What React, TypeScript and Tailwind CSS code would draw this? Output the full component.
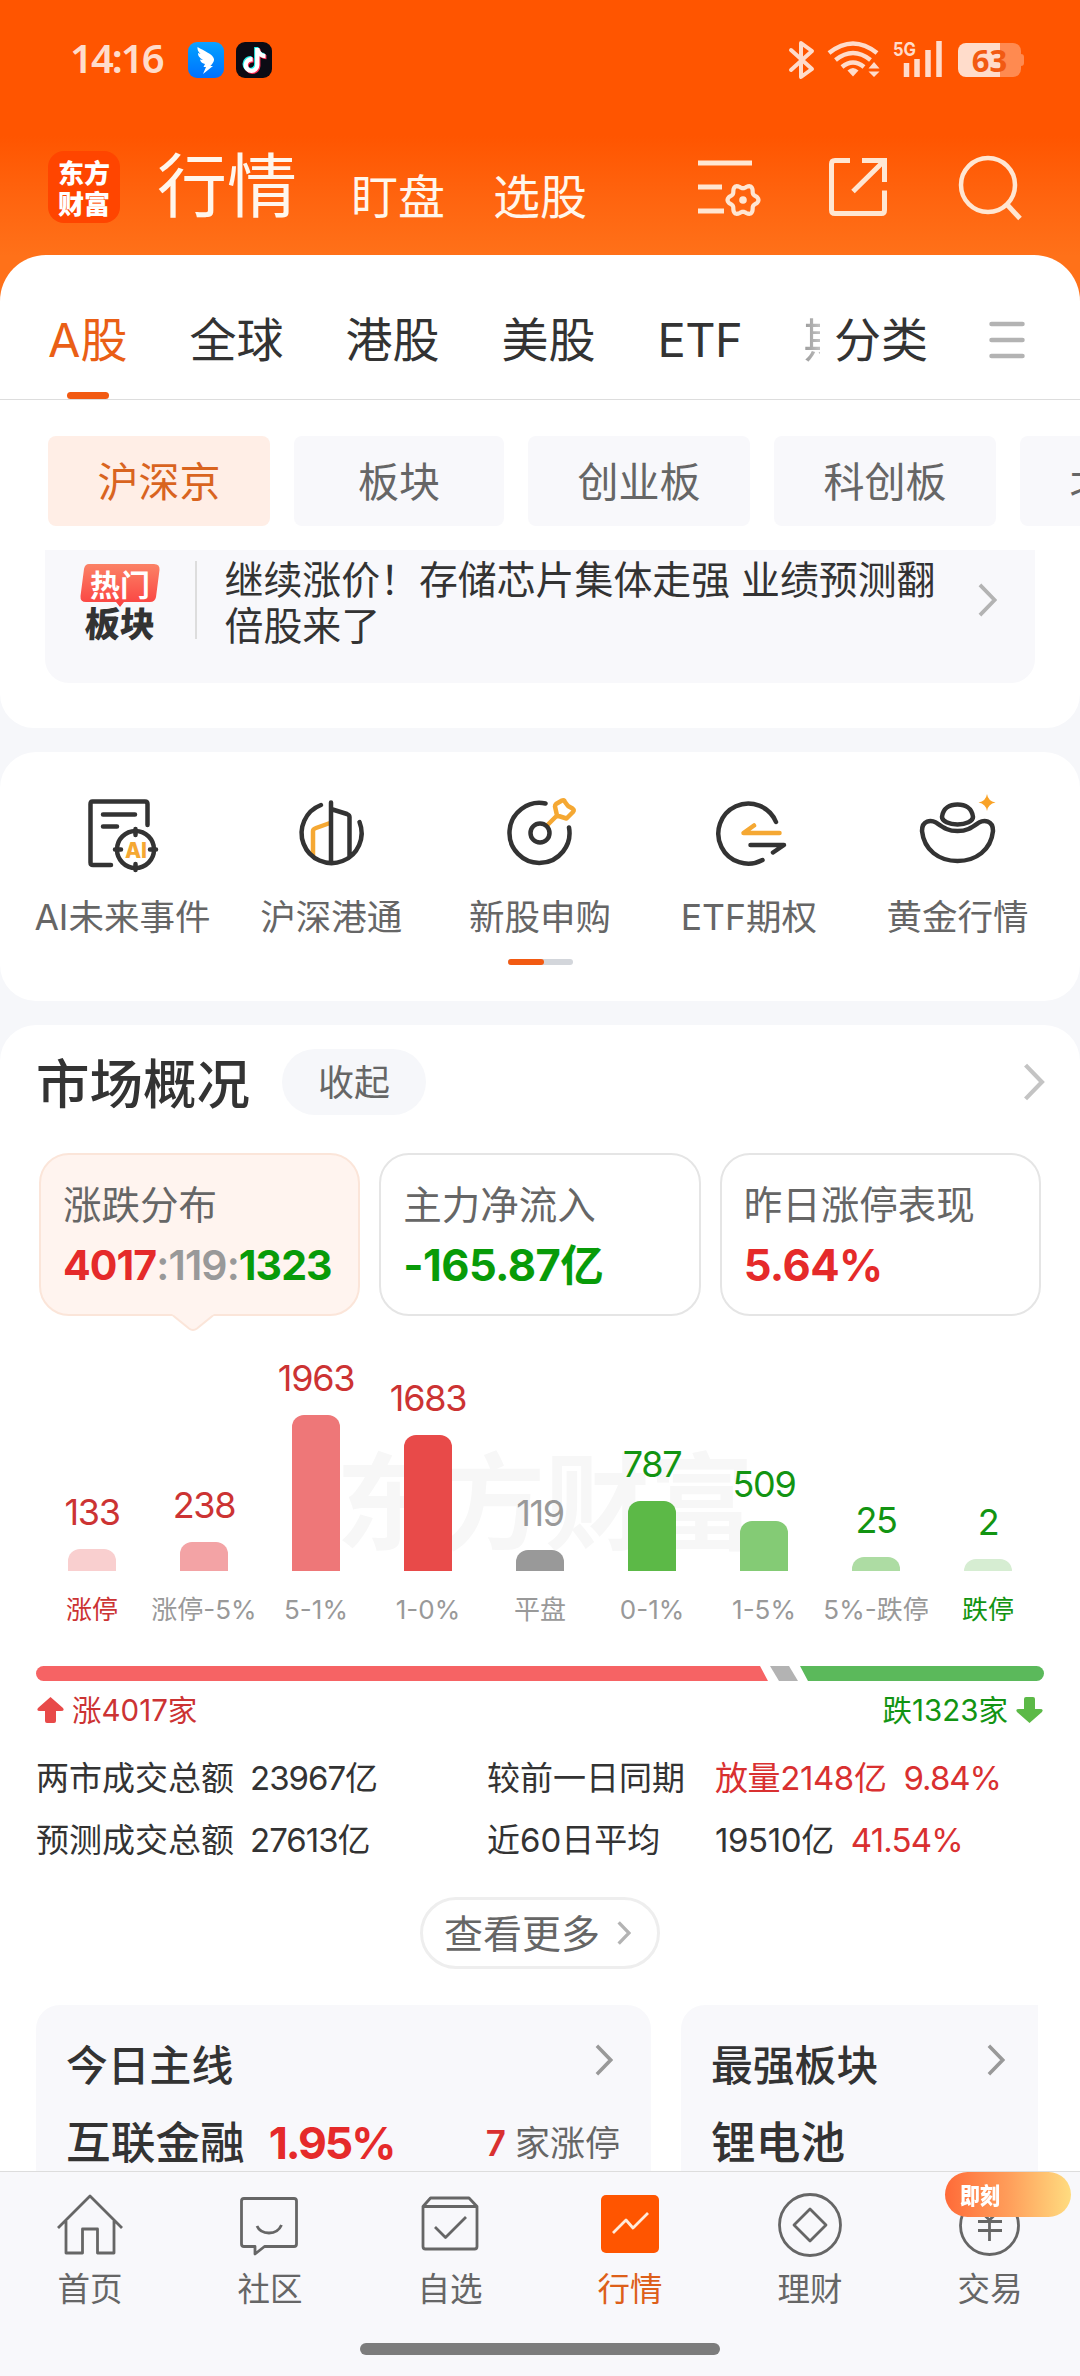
import type { ReactNode } from 'react';
import clsx from 'clsx';
import { FaTiktok } from 'react-icons/fa6';

export default function App() {
  return (
    <div className="relative flex h-[2376px] w-[1080px] flex-col overflow-hidden bg-[#f6f7fa] font-['Inter','Noto_Sans_CJK_SC',sans-serif] text-[#333333]">
      <Header />
      <main className="relative -mt-[47px] flex min-h-0 flex-1 flex-col gap-6 overflow-hidden">
        <MarketSheet />
        <QuickEntries />
        <Overview />
      </main>
      <BottomNav />
    </div>
  );
}

// -----------------------------------------------------------------------------
// Header
// -----------------------------------------------------------------------------

// Six-lobed outline of the settings gear, centred on (46, 45)
const GEAR = Array.from({ length: 72 }, (_, i) => {
  const a = (i * Math.PI) / 36;
  const r = 13.6 + 1.9 * Math.cos(6 * a);
  return `${(46 + r * Math.cos(a)).toFixed(2)},${(45 + r * Math.sin(a)).toFixed(2)}`;
}).join(' ');

function Header() {
  return (
    <header className="h-[302px] shrink-0 bg-linear-to-b from-[#ff5500] from-45% to-[#ff7119] to-85%">
      <StatusBar />
      <div className="flex h-[134px] items-center pl-12 text-[#fff6ec]">
        <div className="flex size-[72px] flex-col items-center justify-center rounded-[16px] bg-[#ff4500] font-['Noto_Sans_CJK_SC',sans-serif] text-[26px] leading-[31px] font-black text-white">
          <span>东方</span>
          <span>财富</span>
        </div>
        <h1 className="ml-[37px] text-[70px] leading-[80px]">行情</h1>
        <span className="mt-[19px] ml-[54px] text-[47px] leading-[56px]">盯盘</span>
        <span className="mt-[19px] ml-[48px] text-[47px] leading-[56px]">选股</span>
        <div className="ml-[110px] flex items-center text-[#ffe6d2]">
          <svg className="h-[64px] w-[66px]" viewBox="0 0 66 64" fill="none" stroke="currentColor" strokeWidth="5">
            <path d="M1 8h54M1 32h24M1 56h26" />
            <polygon points={GEAR} strokeWidth="4.2" strokeLinejoin="round" />
            <circle cx="46" cy="45" r="3.8" fill="currentColor" stroke="none" />
          </svg>
          <svg className="ml-[65px] h-[60px] w-[60px]" viewBox="0 0 60 60" fill="none" stroke="currentColor" strokeWidth="5">
            <path d="M22 3.5H7Q3.5 3.5 3.5 7V53Q3.5 56.5 7 56.5H53.5Q56.5 56.5 56.500 53V33.5" />
            <path d="M34 3.5H56.5V25M56 4L25 34.5" />
          </svg>
          <svg className="ml-[69px] h-[68px] w-[66px]" viewBox="0 0 66 68" fill="none" stroke="currentColor" strokeWidth="4.5">
            <circle cx="31" cy="32" r="27" />
            <path d="M50 51.5L63 65.5" strokeWidth="5" />
          </svg>
        </div>
      </div>
    </header>
  );
}

function StatusBar() {
  return (
    <div className="flex h-[120px] items-center pl-[70px] text-[#ffdccb]">
      <span className="mb-1 w-[118px] font-['Noto_Sans',sans-serif] text-[40px] leading-none font-semibold tracking-[-2px]">14:16</span>
      <div className="size-9 rounded-[9px] bg-linear-to-b from-[#0da2ff] to-[#0070ff]">
        <svg viewBox="0 0 36 36" fill="#ffffff">
          <path d="M9.5 5C16 9 25 12 26 17C26.500 20 23 23 22.5 24H25L15 32L18 25H15.5L17 22C13.5 21 12.5 19.5 12 17.5L15 18C11 15.5 10 13.5 10 11L12.5 12C10 9.5 9.2 7.5 9.5 5Z" />
        </svg>
      </div>
      <div className="ml-3 flex size-9 items-center justify-center rounded-[9px] bg-[#0b0b14]">
        <FaTiktok className="size-[25px] text-white [filter:drop-shadow(-1px_-1px_0_#25f4ee)_drop-shadow(1px_1px_0_#fe2c55)]" />
      </div>
      <svg className="ml-[515px] h-10 w-[158px]" viewBox="0 0 158 40" fill="none" stroke="currentColor">
        {/* bluetooth */}
        <path d="M4 10L25 29L14 37V3L25 11L4 30" strokeWidth="4" strokeLinejoin="round" strokeLinecap="round" />
        {/* wifi */}
        <path d="M42 13Q66 -6 90 13M48.500 20Q66 6 83.5 20M55 27Q66 18 77 27" strokeWidth="4.5" />
        <path d="M66 36.5L60.5 30.5Q66 25.5 71.5 30.5Z" fill="currentColor" stroke="none" />
        <path d="M87 22L92.5 28.5H81.5ZM87 37L81.5 31.5H92.5Z" fill="currentColor" stroke="none" />
        {/* signal */}
        <path d="M119.500 23v14M130 19v18M141 10v27M152 1v36" strokeWidth="5.5" />
        <text x="106" y="16" fontSize="19" fontWeight="700" fill="currentColor" stroke="none" textLength="23" lengthAdjust="spacingAndGlyphs">
          5G
        </text>
      </svg>
      <div className="ml-[13px] flex h-[34px] w-[63px] items-center justify-center rounded-[8px] bg-linear-to-r from-[#ffdccb] from-66% to-[#ff8a50] to-66% font-['Noto_Sans',sans-serif] text-[31px] leading-none font-bold text-[#f25a12]">
        63
      </div>
      <div className="h-3 w-[3px] rounded-r-full bg-[#ff8a50]" />
    </div>
  );
}

// -----------------------------------------------------------------------------
// Market tabs and news
// -----------------------------------------------------------------------------

const BOARDS = [
  { label: '沪深京', box: 'w-[222px]' },
  { label: '板块', box: 'w-[210px]' },
  { label: '创业板', box: 'w-[222px]' },
  { label: '科创板', box: 'w-[222px]' },
  { label: '北交所', box: 'w-[222px]' },
];

function MarketSheet() {
  return (
    <section className="h-[473px] shrink-0 overflow-hidden rounded-t-[46px] rounded-b-[34px] bg-white">
      <div className="flex h-[145px] items-center border-b-[1.5px] border-[#dddddd] pt-[26px] text-[47px] leading-[56px]">
        <div className="flex w-[820px] items-center gap-[62px] overflow-hidden pl-12 whitespace-nowrap">
          <span className="w-[80px] text-[#ea5f16]">A股</span>
          <span>全球</span>
          <span>港股</span>
          <span>美股</span>
          <span className="w-[84px] tracking-[-0.5px]">ETF</span>
          <span className="bg-linear-to-r from-[#999999] to-white to-45% bg-clip-text text-transparent">期货</span>
        </div>
        <span className="ml-[14px]">分类</span>
        <svg className="ml-[61px] h-10 w-9" viewBox="0 0 36 40" stroke="#b3b3b3" strokeWidth="4.5" strokeLinecap="round">
          <path d="M2.500 4h31M2.500 20h31M2.500 36h31" />
        </svg>
      </div>
      <div className="-mt-2 ml-[67px] h-[7px] w-[42px] rounded-full bg-[#f25a12]" />

      <div className="mt-[37px] flex gap-6 overflow-hidden pl-12 text-[41px] leading-[92px] whitespace-nowrap text-[#666666]">
        {BOARDS.map((b, i) => (
          <div
            key={b.label}
            className={clsx(
              'h-[90px] shrink-0 rounded-[8px] text-center',
              b.box,
              i === 0 ? 'bg-[#ffeee6] text-[#d9641f]' : 'bg-[#f8f8fb]'
            )}
          >
            {b.label}
          </div>
        ))}
      </div>

      <div className="mx-[45px] mt-[24px] flex h-[133px] rounded-b-[24px] bg-[#f8f8fb]">
        <HotBadge />
        <div className="mt-[11px] ml-[35px] h-[78px] w-[1.5px] bg-[#dddddd]" />
        <p className="mt-[7px] ml-[28px] w-[730px] text-[38.9px] leading-[46px]">
          继续涨价！存储芯片集体走强&nbsp;业绩预测翻
          <br />
          倍股来了
        </p>
        <Chevron className="mt-[33px] ml-[23px] h-[34px] w-[19px] text-[#b3b3b3]" />
      </div>
    </section>
  );
}

function HotBadge() {
  return (
    <div className="mt-[13px] ml-[35px] w-[80px] font-['Noto_Sans_CJK_SC',sans-serif]">
      <div className="relative flex h-[40px] items-center justify-center">
        <svg className="absolute inset-0 h-[44px] w-[80px]" viewBox="0 0 80 44">
          <defs>
            <linearGradient id="hot" x1="0" y1="0" x2="0" y2="1">
              <stop offset="0" stopColor="#fb8266" />
              <stop offset="1" stopColor="#fb4140" />
            </linearGradient>
          </defs>
          <path d="M9 1H74Q80 1 79.5 7L76 34Q75 39 70 39H44L40 44L36 39H6Q0 39 0.5 33L4 6Q5 1 9 1Z" fill="url(#hot)" />
        </svg>
        <span className="relative text-[30px] leading-[40px] font-bold text-white">热门</span>
      </div>
      <div className="mt-[3px] -skew-x-3 text-center text-[35px] leading-[32px] font-black">板块</div>
    </div>
  );
}

// -----------------------------------------------------------------------------
// Quick entries
// -----------------------------------------------------------------------------

const ENTRIES: { label: string; icon: ReactNode }[] = [
  {
    label: 'AI未来事件',
    icon: (
      <>
        <path d="M67.5 34V13Q67.5 10.5 65 10.5H12.5Q10.5 10.5 10.5 13V71.5Q10.5 74 13 74H31M23 23.5H55M23 35.5H37" />
        <circle cx="55.5" cy="58.5" r="18.5" />
        <path d="M55.5 38v6M55.5 73v6M35 58.5h6M70 58.5h6" />
        <text x="45" y="66.5" fontSize="21" fontWeight="800" fill="#f5a833" stroke="none" textLength="22">
          AI
        </text>
      </>
    ),
  },
  {
    label: '沪深港通',
    icon: (
      <>
        <path d="M41 32L27 37Q24 38 24 40V65" stroke="#f5a833" />
        <path d="M32 14A30 30 0 1 0 70.5 31M42 11.5V71M42 18L58 23Q60.5 24 60.5 26V65" />
      </>
    ),
  },
  {
    label: '新股申购',
    icon: (
      <>
        <path
          d="M49.5 34L59 24.5M59 24.5L57 15.5Q57 14 58 13L64 9.5Q66 8.5 67 11L70 15L74.5 17.5Q76.5 19 75 21L68.5 27.5L59 24.5Z"
          stroke="#f5a833"
        />
        <path d="M47.5 12.5A30 30 0 1 0 71 36.5" />
        <circle cx="42" cy="42" r="9.5" />
      </>
    ),
  },
  {
    label: 'ETF期权',
    icon: (
      <>
        <path d="M72.5 42H36.5L47 34.5" stroke="#f5a833" />
        <path d="M69 31A30 30 0 1 0 55.5 69M43.5 54H77L66 61.5" />
      </>
    ),
  },
  {
    label: '黄金行情',
    icon: (
      <>
        <path d="M26 26C27 17 34 13.5 41.5 13.5C49 13.5 56 17 57 26C57 30 50 33.5 41.5 33.5C33 33.5 26 30 26 26Z" />
        <path d="M6 40C6 29 15 29 20 31.5C28 37 32 40 41.5 40C51 40 55 37 63 31.5C68 29 77 29 77 40C75 59 60 70 41.5 70C23 70 8 59 6 40Z" />
        <path d="M71 3Q72 10 79.5 11.5Q72 13 71 20Q70 13 62.5 11.5Q70 10 71 3Z" fill="#f9a226" stroke="none" />
      </>
    ),
  },
];

function QuickEntries() {
  return (
    <section className="h-[249px] shrink-0 rounded-[36px] bg-white px-[18px] pt-[39px]">
      <div className="grid grid-cols-5">
        {ENTRIES.map((e) => (
          <div key={e.label} className="flex flex-col items-center">
            <svg
              className="size-[84px]"
              viewBox="0 0 84 84"
              fill="none"
              stroke="#333333"
              strokeWidth="4.5"
              strokeLinecap="round"
              strokeLinejoin="round"
            >
              {e.icon}
            </svg>
            <span className="mt-[19px] text-[35.5px] leading-[48px] whitespace-nowrap text-[#666666]">{e.label}</span>
          </div>
        ))}
      </div>
      <div className="mx-auto mt-[17px] h-[6px] w-[65px] rounded-full bg-[#d3d6db]">
        <div className="h-full w-[36px] rounded-full bg-[#f25a12]" />
      </div>
    </section>
  );
}

// -----------------------------------------------------------------------------
// Market overview
// -----------------------------------------------------------------------------

const BARS = [
  { value: 133, label: '涨停', height: 22, bar: 'bg-[#f9cfcf]', text: 'text-[#cc3333]', caption: 'text-[#cc3333]' },
  { value: 238, label: '涨停-5%', height: 29, bar: 'bg-[#f3a3a5]', text: 'text-[#cc3333]', caption: 'text-[#999999]' },
  { value: 1963, label: '5-1%', height: 156, bar: 'bg-[#ee7778]', text: 'text-[#cc3333]', caption: 'text-[#999999]' },
  { value: 1683, label: '1-0%', height: 136, bar: 'bg-[#e84a49]', text: 'text-[#cc3333]', caption: 'text-[#999999]' },
  { value: 119, label: '平盘', height: 21, bar: 'bg-[#999999]', text: 'text-[#999999]', caption: 'text-[#999999]' },
  { value: 787, label: '0-1%', height: 70, bar: 'bg-[#5cb947]', text: 'text-[#129412]', caption: 'text-[#999999]' },
  { value: 509, label: '1-5%', height: 50, bar: 'bg-[#84cb75]', text: 'text-[#129412]', caption: 'text-[#999999]' },
  { value: 25, label: '5%-跌停', height: 14, bar: 'bg-[#addca3]', text: 'text-[#129412]', caption: 'text-[#999999]' },
  { value: 2, label: '跌停', height: 12, bar: 'bg-[#d6edd2]', text: 'text-[#129412]', caption: 'text-[#129412]' },
];

function Overview() {
  return (
    <section className="min-h-0 flex-1 rounded-t-[36px] bg-white pt-[24px]">
      <div className="flex h-[66px] items-center pl-9">
        <h2 className="mt-[5px] text-[53.5px] leading-[66px] font-medium">市场概况</h2>
        <span className="ml-[32px] h-[66px] w-[144px] rounded-full bg-[#f6f7fa] text-center text-[36px] leading-[69px] text-[#666666]">
          收起
        </span>
        <Chevron className="ml-[597px] h-[38px] w-[22px] text-[#c4c4c4]" />
      </div>

      <div className="mt-[38px] grid h-[163px] grid-cols-3 gap-[19px] px-[39px]">
        <SummaryCard title="涨跌分布" active>
          <span className="text-[41px] tracking-[-0.9px]">
            <b className="font-bold text-[#e52a2a]">4017</b>
            <span className="font-semibold text-[#999999]">:119:</span>
            <b className="font-bold text-[#089b08]">1323</b>
          </span>
        </SummaryCard>
        <SummaryCard title="主力净流入">
          <b className="text-[43.5px] font-bold tracking-[-0.6px] text-[#089b08]">-165.87亿</b>
        </SummaryCard>
        <SummaryCard title="昨日涨停表现">
          <b className="text-[43.5px] font-bold tracking-[-0.6px] text-[#e52a2a]">5.64%</b>
        </SummaryCard>
      </div>

      <Distribution />
      <Breadth />
      <Turnover />

      <div className="mt-[26px] flex justify-center">
        <button className="flex h-[72px] w-[240px] items-center rounded-full border-[3px] border-[#eeeeee] pl-[21px] text-[39px] leading-none text-[#666666]">
          查看更多
          <Chevron className="ml-[17px] h-[24px] w-[14px] text-[#b3b3b3]" thick={5} />
        </button>
      </div>

      <div className="mt-[36px] mr-[42px] ml-9 flex gap-[30px] overflow-hidden font-medium">
        <div className="h-[200px] w-[615px] shrink-0 rounded-t-[24px] bg-[#f8f8fb] pt-[33px] pr-[31px] pl-[30px]">
          <div className="flex h-[56px] items-center justify-between text-[41.8px] leading-[56px]">
            今日主线
            <Chevron className="mr-[7px] mb-3 h-[32px] w-[18px] text-[#999999]" />
          </div>
          <div className="mt-[21px] flex h-[56px] items-center text-[44.7px] leading-[56px]">
            互联金融
            <b className="ml-[24px] text-[44.5px] font-bold tracking-[-2.1px] text-[#e52a2a]">1.95%</b>
            <span className="ml-auto text-[35px] font-semibold text-[#d93030]">7</span>
            <span className="ml-[9px] text-[35px] font-normal text-[#666666]">家涨停</span>
          </div>
        </div>
        <div className="h-[200px] w-[615px] shrink-0 rounded-t-[24px] bg-[#f8f8fb] pt-[33px] pl-[30px]">
          <div className="flex h-[56px] items-center text-[41.8px] leading-[56px]">
            最强板块
            <Chevron className="mb-3 ml-[109px] h-[32px] w-[18px] text-[#999999]" />
          </div>
          <div className="mt-[21px] text-[44.7px] leading-[56px]">锂电池</div>
        </div>
      </div>
    </section>
  );
}

function SummaryCard({ title, active, children }: { title: string; active?: boolean; children: ReactNode }) {
  return (
    <div
      className={clsx(
        'relative rounded-[30px] border-2 pt-[22px] pl-[22px] whitespace-nowrap',
        active ? 'border-[#fbe5d9] bg-[#fff4ef]' : 'border-[#e5e5e5]'
      )}
    >
      <div className="text-[38.5px] leading-[56px] text-[#666666]">{title}</div>
      <div className="mt-[4px] leading-[56px]">{children}</div>
      {active && (
        <svg className="absolute top-[158px] left-[131px] h-[19px] w-[42px]" viewBox="0 0 42 19" fill="#fff4ef">
          <path d="M0 0L1 2.5L17 15.5Q21 18.5 25 15.5L41 2.5L42 0Z" />
          <path d="M1 2.5L17 15.5Q21 18.5 25 15.5L41 2.5" stroke="#fbe5d9" strokeWidth="2" fill="none" />
        </svg>
      )}
    </div>
  );
}

function Distribution() {
  return (
    <div className="relative px-9">
      <div className="absolute top-[105px] left-[336px] font-['Noto_Sans_CJK_SC',sans-serif] text-[104.5px] leading-[150px] font-bold text-[#f7f7f7]">
        东方财富
      </div>
      <div className="relative grid h-[255px] grid-cols-9">
        {BARS.map((b) => (
          <div key={b.label} className="flex flex-col items-center justify-end">
            <span className={clsx('mb-[18px] text-[36px] leading-[38px] tracking-[-1.3px]', b.text)}>{b.value}</span>
            <div className={clsx('w-12 rounded-t-[12px]', b.bar)} style={{ height: b.height }} />
          </div>
        ))}
      </div>
      <div className="relative mt-[19px] grid grid-cols-9 text-center text-[26px] leading-[40px] whitespace-nowrap">
        {BARS.map((b) => (
          <span key={b.label} className={b.caption}>
            {b.label}
          </span>
        ))}
      </div>
    </div>
  );
}

function Breadth() {
  return (
    <div className="mt-[36px] px-9 text-[29.5px] leading-[40px]">
      <svg className="h-[15px] w-[1008px]" viewBox="0 0 1008 15">
        <path d="M7.5 0H724L732 15H7.5A7.5 7.5 0 0 1 7.5 0Z" fill="#f66364" />
        <path d="M734 0H753L762 15H743Z" fill="#b3b3b3" />
        <path d="M764 0H1000.5A7.5 7.5 0 0 1 1000.5 15H772Z" fill="#5bb95b" />
      </svg>
      <div className="mt-[9px] flex items-center justify-between">
        <div className="flex items-center text-[#cc3333]">
          <svg className="ml-px h-[26px] w-[27px]" viewBox="0 0 27 26" fill="#e84a49">
            <path d="M13.5 0L26 11Q28 14 24 14H19V24Q19 26 17 26H10Q8 26 8 24V14H3Q-1 14 1 11Z" />
          </svg>
          <span className="ml-[8px]">涨4017家</span>
        </div>
        <div className="flex items-center text-[#129412]">
          <span className="mr-[8px]">跌1323家</span>
          <svg className="mr-px h-[26px] w-[27px] rotate-180" viewBox="0 0 27 26" fill="#5cb947">
            <path d="M13.5 0L26 11Q28 14 24 14H19V24Q19 26 17 26H10Q8 26 8 24V14H3Q-1 14 1 11Z" />
          </svg>
        </div>
      </div>
    </div>
  );
}

function Turnover() {
  return (
    <div className="mt-[17px] grid grid-cols-[214px_237px_228px_auto] px-9 text-[33px] leading-[62px] whitespace-nowrap">
      <span>两市成交总额</span>
      <span className="tracking-[-1px]">23967亿</span>
      <span>较前一日同期</span>
      <span className="tracking-[-0.4px] text-[#d93030]">
        放量2148亿<span className="ml-[17px] tracking-[-1px]">9.84%</span>
      </span>
      <span>预测成交总额</span>
      <span className="tracking-[-1px]">27613亿</span>
      <span>近60日平均</span>
      <span className="tracking-[-0.4px]">
        19510亿<span className="ml-[17px] tracking-[-0.8px] text-[#d93030]">41.54%</span>
      </span>
    </div>
  );
}

function Chevron({ className, thick = 4 }: { className?: string; thick?: number }) {
  return (
    <svg className={className} viewBox="0 0 20 36" fill="none" stroke="currentColor" strokeWidth={thick}>
      <path d="M2 2L17.5 18L2 34" />
    </svg>
  );
}

// -----------------------------------------------------------------------------
// Bottom navigation
// -----------------------------------------------------------------------------

const NAV: { label: string; icon: ReactNode }[] = [
  {
    label: '首页',
    icon: <path d="M2 37L34 5L66 37M10 30V62H26.5V38H41.5V62H58V30" />,
  },
  {
    label: '社区',
    icon: (
      <>
        <path d="M8 7.5H58Q60.5 7.5 60.5 10V53Q60.5 55.5 58 55.5H28.5L19 63V55.5H8Q5.5 55.5 5.5 53V10Q5.5 7.5 8 7.5Z" />
        <path d="M21 35Q24 42 33 42Q42 42 45.5 34" />
      </>
    ),
  },
  {
    label: '自选',
    icon: (
      <>
        <path d="M7 15.5V55.5Q7 58 9.5 58H58.5Q61 58 61 55.5V15.5L53 7H14.5L7 15.5H61" />
        <path d="M19 36L29.5 46.5L50 26" />
      </>
    ),
  },
  {
    label: '行情',
    icon: (
      <>
        <rect x="5" y="4" width="58" height="58" rx="5" fill="#ff5500" stroke="none" />
        <path d="M17 42L30 29L37 37L52 22" stroke="#ffeada" />
      </>
    ),
  },
  {
    label: '理财',
    icon: (
      <>
        <circle cx="34" cy="34" r="30.5" />
        <path d="M34 18L50 34L34 50L18 34Z" strokeLinejoin="round" />
      </>
    ),
  },
  {
    label: '交易',
    icon: (
      <>
        <circle cx="33.5" cy="34.5" r="29" />
        <path d="M22 18L33.5 29L45 18M33.5 29V50M22 30.5H46M22 39.5H46" />
      </>
    ),
  },
];

function BottomNav() {
  return (
    <nav className="relative h-[205px] shrink-0 border-t-[1.5px] border-[#dddddd] bg-[#f8f8fb]">
      <div className="grid grid-cols-6 pt-[19px]">
        {NAV.map((n) => (
          <div
            key={n.label}
            className={clsx('flex flex-col items-center', n.label === '行情' ? 'text-[#dd5f1a]' : 'text-[#666666]')}
          >
            <svg
              className="size-[68px]"
              viewBox="0 0 68 68"
              fill="none"
              stroke="currentColor"
              strokeWidth="2.8"
              strokeLinejoin="round"
            >
              {n.icon}
            </svg>
            <span className="mt-[9px] text-[32.5px] leading-[44px]">{n.label}</span>
          </div>
        ))}
      </div>
      <div className="absolute top-0 right-[9px] h-[45px] w-[126px] rounded-full bg-linear-to-r from-[#ff6a38] via-[#ff9d5a] to-[#ffdc80] pl-[15px] font-['Noto_Sans_CJK_SC',sans-serif] text-[20px] leading-[45px] font-black text-white">
        <span className="inline-block scale-y-115">即刻</span>
      </div>
      <div className="mx-auto mt-[31px] h-3 w-[360px] rounded-full bg-[#7c7c7c]" />
    </nav>
  );
}
